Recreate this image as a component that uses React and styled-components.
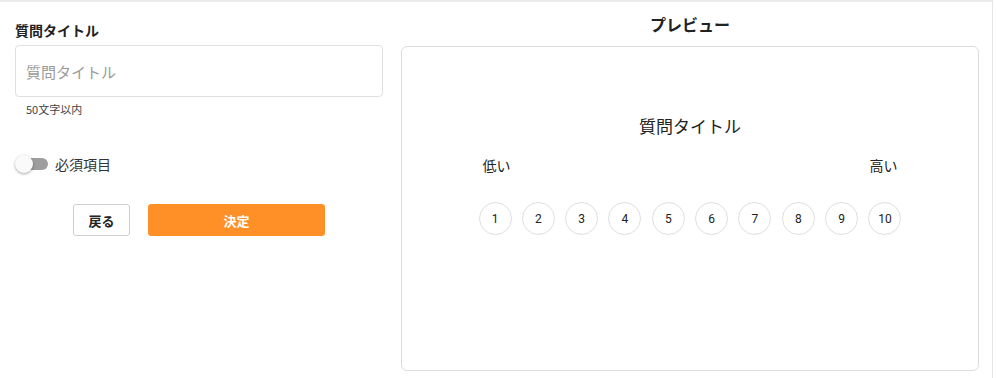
import { styled, createGlobalStyle } from 'styled-components';

const GlobalStyle = createGlobalStyle`
  html, body {
    margin: 0;
    padding: 0;
    background: #fff;
  }
  body {
    font-family: "Noto Sans CJK JP", "Noto Sans", Roboto, sans-serif;
    color: #333;
  }
  * {
    box-sizing: border-box;
  }
`;

const Page = styled.div`
  width: 993px;
  height: 378px;
  border-top: 2px solid #ebebeb;
  border-right: 1px solid #e6e6e6;
  display: grid;
  grid-template-columns: 368px 578px;
  column-gap: 18px;
  padding: 0 0 0 15px;
`;

const Editor = styled.div`
  display: flex;
  flex-direction: column;
  padding-top: 18px;
`;

const FieldLabel = styled.label`
  font-size: 14px;
  line-height: 20px;
  font-weight: 700;
  color: #222;
`;

const TextInput = styled.input`
  margin-top: 5px;
  height: 52px;
  width: 100%;
  border: 1px solid #e0e0e0;
  border-radius: 4px;
  padding: 0 10px;
  font-family: inherit;
  font-size: 15px;
  color: #333;
  outline: none;
  &::placeholder {
    color: #9a9a9a;
  }
`;

const Helper = styled.div`
  margin-top: 4px;
  padding-left: 11px;
  font-size: 11px;
  line-height: 16px;
  color: #444;
`;

const ToggleRow = styled.label`
  margin-top: 37px;
  display: flex;
  align-items: center;
  gap: 7px;
  height: 20px;
  font-size: 14px;
  color: #333;
  cursor: pointer;
`;

const Track = styled.span`
  position: relative;
  width: 32px;
  height: 12px;
  border-radius: 6px;
  background: ${(p) => (p.$on ? '#ffbf86' : '#9e9e9e')};
  margin-left: 1px;
`;

const Thumb = styled.span`
  position: absolute;
  top: -3px;
  left: ${(p) => (p.$on ? '15px' : '-1px')};
  width: 18px;
  height: 18px;
  border-radius: 50%;
  background: ${(p) => (p.$on ? '#ff9028' : '#fafafa')};
  box-shadow: 0 1px 3px rgba(0, 0, 0, 0.35);
`;

const Actions = styled.div`
  margin-top: 30px;
  display: flex;
  justify-content: center;
  gap: 18px;
`;

const Button = styled.button`
  height: 32px;
  width: ${(p) => (p.$primary ? '177px' : '57px')};
  border-radius: 3px;
  border: 1px solid ${(p) => (p.$primary ? '#ff9028' : '#cfcfcf')};
  background: ${(p) => (p.$primary ? '#ff9028' : '#fff')};
  color: ${(p) => (p.$primary ? '#fff' : '#222')};
  font-family: inherit;
  font-size: 13px;
  font-weight: 700;
  cursor: pointer;
`;

const PreviewColumn = styled.div`
  display: flex;
  flex-direction: column;
  padding-top: 10px;
`;

const PreviewHeading = styled.h2`
  margin: 0;
  text-align: center;
  font-size: 16px;
  line-height: 24px;
  font-weight: 700;
  color: #222;
`;

const PreviewBox = styled.div`
  margin-top: 10px;
  height: 325px;
  border: 1px solid #dcdcdc;
  border-radius: 6px;
  display: flex;
  flex-direction: column;
  align-items: center;
  padding-top: 66px;
`;

const QuestionTitle = styled.div`
  font-size: 17px;
  line-height: 26px;
  color: #222;
`;

const Scale = styled.div`
  width: 423px;
  margin-top: 16px;
`;

const ScaleLabels = styled.div`
  display: flex;
  justify-content: space-between;
  padding: 0 4px;
  font-size: 14px;
  line-height: 20px;
  color: #222;
`;

const Options = styled.div`
  margin-top: 27px;
  display: flex;
  justify-content: space-between;
`;

const Option = styled.button`
  width: 33px;
  height: 33px;
  border-radius: 50%;
  border: 1px solid #dedede;
  background: #fff;
  padding: 0;
  font-family: Roboto, "Noto Sans", sans-serif;
  font-size: 12px;
  color: #222;
  cursor: pointer;
`;

const App = () => {
  const options = Array.from({ length: 10 }, (_, i) => i + 1);

  return (
    <>
      <GlobalStyle />
      <Page>
        <Editor>
          <FieldLabel>質問タイトル</FieldLabel>
          <TextInput placeholder="質問タイトル" />
          <Helper>50文字以内</Helper>
          <ToggleRow>
            <Track>
              <Thumb />
            </Track>
            必須項目
          </ToggleRow>
          <Actions>
            <Button>戻る</Button>
            <Button $primary>決定</Button>
          </Actions>
        </Editor>
        <PreviewColumn>
          <PreviewHeading>プレビュー</PreviewHeading>
          <PreviewBox>
            <QuestionTitle>質問タイトル</QuestionTitle>
            <Scale>
              <ScaleLabels>
                <span>低い</span>
                <span>高い</span>
              </ScaleLabels>
              <Options>
                {options.map((n) => (
                  <Option key={n}>{n}</Option>
                ))}
              </Options>
            </Scale>
          </PreviewBox>
        </PreviewColumn>
      </Page>
    </>
  );
};

export default App;
